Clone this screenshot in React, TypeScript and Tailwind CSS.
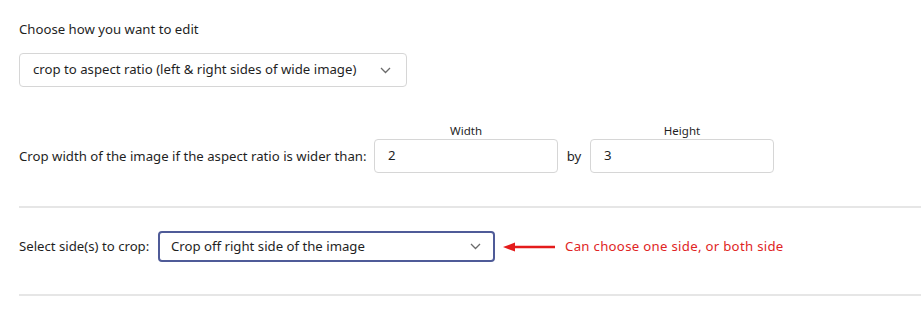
const Chevron = () => (
  <svg width="11" height="7" viewBox="0 0 11 7" fill="none">
    <polyline points="1,1 5.5,5.5 10,1" stroke="#6b6b6b" strokeWidth="1.3" />
  </svg>
);

const App = () => {
  return (
    <div className="w-[921px] h-[314px] bg-white pl-[19px] pt-[19px] text-[13.2px] text-[#1f1f1f] font-['Noto_Sans','Open_Sans',sans-serif] overflow-hidden">
      <p className="leading-[20px]">Choose how you want to edit</p>

      <div className="mt-[14px] w-[388px] h-[34px] border border-[#d6d6d6] rounded-[4px] flex items-center justify-between pl-[13px] pr-[15px]">
        <span>crop to aspect ratio (left &amp; right sides of wide image)</span>
        <Chevron />
      </div>

      <div className="mt-[36px] flex items-end">
        <span className="w-[355px] h-[34px] leading-[34px] whitespace-nowrap">
          Crop width of the image if the aspect ratio is wider than:
        </span>
        <div className="flex flex-col items-center">
          <span className="text-[11.5px] leading-[16px]">Width</span>
          <div className="w-[184px] h-[34px] border border-[#d6d6d6] rounded-[4px] flex items-center pl-[13px]">
            2
          </div>
        </div>
        <span className="h-[34px] leading-[34px] w-[32px] text-center">by</span>
        <div className="flex flex-col items-center">
          <span className="text-[11.5px] leading-[16px]">Height</span>
          <div className="w-[184px] h-[34px] border border-[#d6d6d6] rounded-[4px] flex items-center pl-[13px]">
            3
          </div>
        </div>
      </div>

      <div className="mt-[33px] h-[2px] bg-[#e6e6e6]" />

      <div className="mt-[23px] flex items-center">
        <span className="w-[139px] whitespace-nowrap">Select side(s) to crop:</span>
        <div className="w-[337px] h-[31px] border-2 border-[#4f5b98] rounded-[4px] flex items-center justify-between pl-[11px] pr-[12px]">
          <span>Crop off right side of the image</span>
          <Chevron />
        </div>
        <svg className="ml-[8px]" width="52" height="10" viewBox="0 0 52 10">
          <line x1="10" y1="5" x2="52" y2="5" stroke="#e41b1b" strokeWidth="2.5" />
          <polygon points="0,5 12,0.5 12,9.5" fill="#e41b1b" />
        </svg>
        <span className="ml-[10px] text-[#e02424] tracking-[0.3px]">Can choose one side, or both side</span>
      </div>

      <div className="mt-[32px] h-[2px] bg-[#e6e6e6]" />
    </div>
  );
};

export default App;
